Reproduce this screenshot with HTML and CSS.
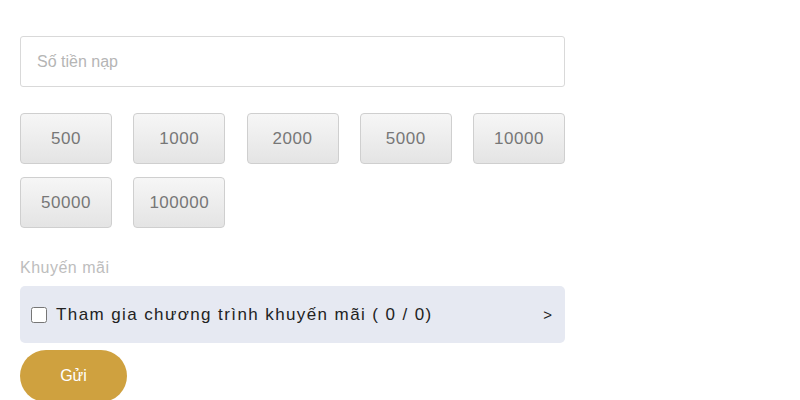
FILE: index.html
```html
<!DOCTYPE html>
<html lang="vi">
<head>
    <meta charset="UTF-8">
    <title>Nạp tiền</title>
    <meta name="viewport" content="width=device-width, initial-scale=1.0">
    <link rel="stylesheet" href="styles.css">
</head>
<body>

<div class="deposit-form">
    <input type="text" class="amount-input" placeholder="Số tiền nạp" />

    <div class="amount-list">
        <button class="amount-btn">500</button>
        <button class="amount-btn">1000</button>
        <button class="amount-btn">2000</button>
        <button class="amount-btn">5000</button>
        <button class="amount-btn">10000</button>
        <button class="amount-btn">50000</button>
        <button class="amount-btn">100000</button>
    </div>

    <div class="promo-label">Khuyến mãi</div>
    <div class="promo-box">
        <label class="promo-check">
            <input type="checkbox" />
            <span>Tham gia chương trình khuyến mãi ( 0 / 0)</span>
        </label>
        <span class="promo-arrow">&gt;</span>
    </div>

    <button class="submit-btn">Gửi</button>
</div>

</body>
</html>
```

FILE: styles.css
```css
body {
    font-family: 'Liberation Sans', Arial, sans-serif;
    margin: 0;
    padding: 36px 20px 0;
    background: #fff;
    color: #333;
}

.deposit-form {
    width: 545px;
}

.amount-input {
    display: block;
    width: 100%;
    height: 51px;
    box-sizing: border-box;
    padding: 0 16px;
    border: 1px solid #d9d9d9;
    border-radius: 3px;
    font-family: inherit;
    font-size: 16px;
    color: #333;
    outline: none;
}

.amount-input::placeholder {
    color: #b5b5b5;
}

.amount-list {
    display: grid;
    grid-template-columns: repeat(5, 92px);
    column-gap: 21.25px;
    row-gap: 13px;
    margin-top: 26px;
}

.amount-btn {
    height: 51px;
    border: 1px solid #cfcfcf;
    border-radius: 4px;
    background: linear-gradient(#f6f6f6, #e4e4e4);
    font-family: inherit;
    font-size: 17px;
    color: #777;
    letter-spacing: 0.5px;
    cursor: pointer;
}

.promo-label {
    margin-top: 31px;
    font-size: 16px;
    color: #bdbdbd;
    letter-spacing: 0.5px;
}

.promo-box {
    display: flex;
    align-items: center;
    justify-content: space-between;
    height: 57px;
    margin-top: 9px;
    padding: 0 11px;
    background: #e6e9f2;
    border-radius: 5px;
}

.promo-check {
    display: flex;
    align-items: center;
    font-size: 17px;
    color: #222;
    letter-spacing: 1.4px;
}

.promo-check input {
    width: 16px;
    height: 16px;
    margin: 0 9px 0 0;
}

.promo-arrow {
    font-size: 15px;
    color: #222;
    margin-right: 2px;
}

.submit-btn {
    margin-top: 7px;
    width: 107px;
    height: 52px;
    border: none;
    border-radius: 26px;
    background: #cfa13f;
    color: #fff;
    font-family: inherit;
    font-size: 16px;
    cursor: pointer;
}
```
